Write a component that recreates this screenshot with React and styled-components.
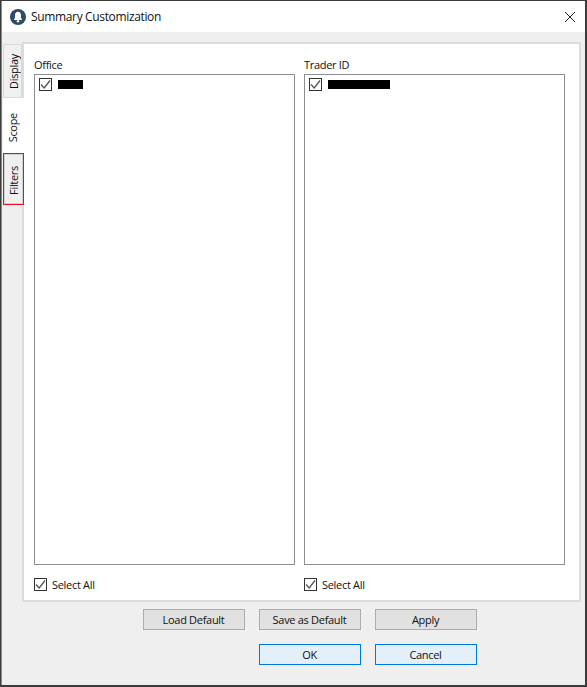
import React from "react";
import styled, { createGlobalStyle } from "styled-components";

const Global = createGlobalStyle`
  html, body { margin: 0; padding: 0; background: #f0f0f0; }
  #root { width: 587px; height: 687px; }
  * { box-sizing: border-box; }
`;

const Window = styled.div`
  width: 587px; height: 687px;
  display: flex; flex-direction: column;
  background: #efefef;
  border: 1px solid #3c3c3c;
  border-width: 1px 2px 2px 1px;
  box-shadow: inset 1px 0 0 #8a8a8a;
  font-family: "Open Sans", "Noto Sans", sans-serif;
  font-size: 11px;
  letter-spacing: -0.3px;
  color: #111;
`;
const TitleBar = styled.div`
  height: 31px; flex: none;
  background: #fff;
  margin-left: 1px;
  display: flex; align-items: center;
  padding: 0 9px 0 8px;
  gap: 5px;
`;
const Title = styled.div`
  flex: 1;
  font-size: 12px;
  letter-spacing: -0.35px;
`;
const Body = styled.div`
  flex: none;
  height: 570px;
  padding: 10px 5px 0 2px;
  display: flex;
`;
const TabRail = styled.div`
  width: 19px; flex: none;
  display: flex; flex-direction: column;
  padding-top: 2px;
  position: relative;
  z-index: 1;
`;
const Tab = styled.div`
  height: ${p => p.$h}px;
  width: ${p => p.$w || 19}px;
  flex: none;
  padding: 2px 0 0 ${p => p.$outline ? 0 : 2}px;
  display: flex; align-items: center; justify-content: center;
  background: ${p => p.$selected ? "#fff" : "#f0f0f0"};
  border: ${p => p.$outline ? "1px solid #e81123" : p.$selected ? "none" : "1px solid #d9d9d9"};
  box-shadow: ${p => p.$outline ? "inset 0 0 0 1px #d0d0d0" : "none"};
  ${p => p.$selected && "width: 21px; padding: 4px 2px 0 0;"}
`;
const TabText = styled.span`
  writing-mode: vertical-rl;
  transform: rotate(180deg);
  line-height: 1;
`;
const Panel = styled.div`
  flex: 1;
  background: #fff;
  border: 2px solid #dcdcdc;
  padding: 15px 14px 0 10px;
  display: flex;
  gap: 9px;
`;
const Column = styled.div`
  width: 261px;
  display: flex; flex-direction: column;
`;
const Label = styled.div`
  height: 15px;
  line-height: 12px;
`;
const ListBox = styled.div`
  height: 491px;
  border: 1px solid #8a8f94;
  padding: 3px 4px;
  display: flex; flex-direction: column;
`;
const Item = styled.div`
  display: flex; align-items: center; gap: 6px;
`;
const Box = styled.svg`
  width: 13px; height: 13px; flex: none; display: block;
`;
const Redact = styled.div`
  height: 9px; width: ${p => p.$w}px; background: #000;
`;
const SelectAll = styled.label`
  margin-top: 12px;
  display: flex; align-items: center; gap: 5px;
  height: 15px;
`;
const Actions = styled.div`
  flex: none;
  display: flex; flex-direction: column; gap: 14px;
  padding: 7px 0 0 142px;
`;
const ButtonRow = styled.div`
  display: flex; gap: 14px;
  justify-content: ${p => p.$end ? "flex-end" : "flex-start"};
  width: 334px;
`;
const Button = styled.button`
  width: 102px; height: 21px;
  padding: 0 1px 0 0;
  font-family: inherit;
  font-size: 11px;
  letter-spacing: inherit;
  color: #111;
  line-height: 1;
  background: ${p => p.$primary ? "#e3eff9" : "#e1e1e1"};
  border: 1px solid ${p => p.$primary ? "#0078d7" : "#adadad"};
`;

const Check = () => (
  <Box viewBox="0 0 13 13">
    <rect x="0.5" y="0.5" width="12" height="12" fill="#fff" stroke="#333" />
    <path d="M2 6.5 L5.2 10 L11 2.5" fill="none" stroke="#555" strokeWidth="1.3" />
  </Box>
);

const Bell = () => (
  <svg width="16" height="16" viewBox="0 0 16 16">
    <circle cx="8" cy="8" r="8" fill="#2f4a68" />
    <path d="M8 2.8c-1.9 0-3 1.4-3 3.2v2.6L3.9 11h8.2L11 8.6V6c0-1.8-1.1-3.2-3-3.2z" fill="#fff" />
    <circle cx="8" cy="12.2" r="1.2" fill="#fff" />
  </svg>
);

const Close = () => (
  <svg width="12" height="12" viewBox="0 0 12 12">
    <path d="M1 1 L11 11 M11 1 L1 11" stroke="#222" strokeWidth="1" fill="none" />
  </svg>
);

const ListColumn = ({ label, w }) => (
  <Column>
    <Label>{label}</Label>
    <ListBox>
      <Item>
        <Check />
        <Redact $w={w} />
      </Item>
    </ListBox>
    <SelectAll>
      <Check />
      Select All
    </SelectAll>
  </Column>
);

export default function App() {
  return (
    <>
      <Global />
      <Window>
        <TitleBar>
          <Bell />
          <Title>Summary Customization</Title>
          <Close />
        </TitleBar>
        <Body>
          <TabRail>
            <Tab $h={54}><TabText>Display</TabText></Tab>
            <Tab $h={55} $selected><TabText>Scope</TabText></Tab>
            <Tab $h={52} $w={21} $outline><TabText>Filters</TabText></Tab>
          </TabRail>
          <Panel>
            <ListColumn label="Office" w={25} />
            <ListColumn label="Trader ID" w={62} />
          </Panel>
        </Body>
        <Actions>
          <ButtonRow>
            <Button>Load Default</Button>
            <Button>Save as Default</Button>
            <Button>Apply</Button>
          </ButtonRow>
          <ButtonRow $end>
            <Button $primary>OK</Button>
            <Button $primary>Cancel</Button>
          </ButtonRow>
        </Actions>
      </Window>
    </>
  );
}
